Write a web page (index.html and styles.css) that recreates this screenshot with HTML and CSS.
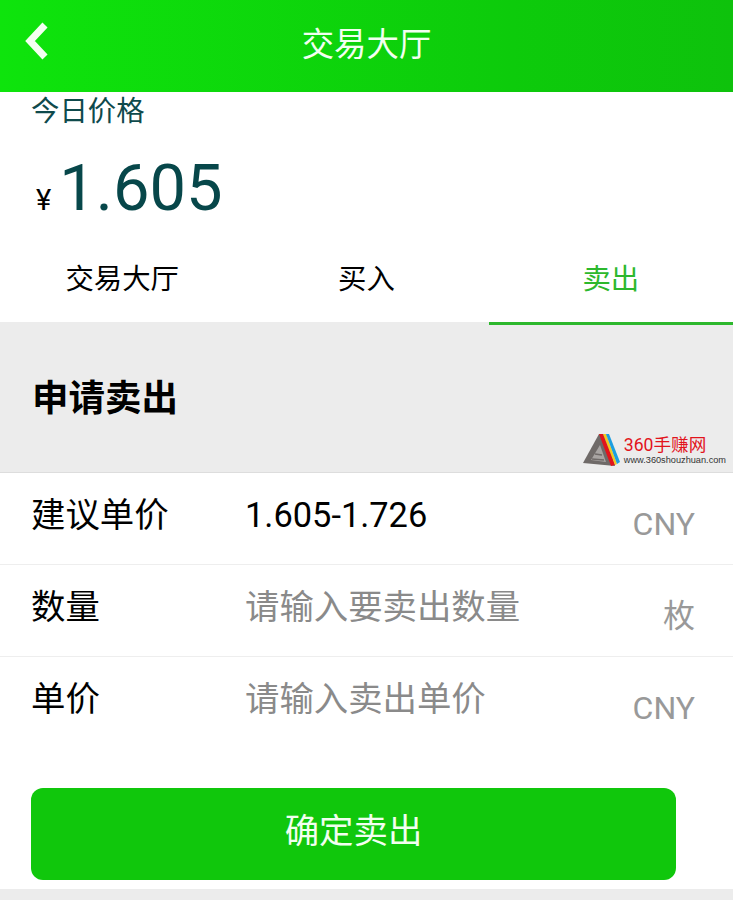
FILE: index.html
```html
<!DOCTYPE html>
<html lang="zh">
<head>
  <meta charset="UTF-8">
  <meta name="viewport" content="width=device-width, initial-scale=1.0">
  <title>交易大厅</title>
  <link rel="stylesheet" href="styles.css">
</head>
<body>
  <header class="topbar">
    <svg class="back" width="28" height="38" viewBox="0 0 28 38">
      <path d="M23 3 L8 19 L23 35" fill="none" stroke="#f4fff2" stroke-width="7"/>
    </svg>
    <h1>交易大厅</h1>
  </header>

  <section class="price">
    <p class="price-label">今日价格</p>
    <p class="price-value"><span class="yen">¥</span>1.605</p>
  </section>

  <nav class="tabs">
    <a class="tab">交易大厅</a>
    <a class="tab">买入</a>
    <a class="tab active">卖出</a>
  </nav>

  <section class="section-head">
    <h2>申请卖出</h2>
    <div class="watermark">
      <svg width="37" height="34" viewBox="0 0 37 34">
        <path d="M0 30 L16 1 L23 1 L32 33 Z" fill="#6f6a68"/>
        <path d="M8 27 L17 12 L23 29 Z" fill="#a8a4a2"/>
        <path d="M12 21 L19 22 M9 26 L21 27" stroke="#6f6a68" stroke-width="1.5"/>
        <path d="M16 1 L20 1 L32 32 L28 33 Z" fill="#e2141c"/>
        <path d="M20 1 L23 1 L34 31 L32 32 Z" fill="#f4c821"/>
        <path d="M23 1 L26 1 L37 29 L34 31 Z" fill="#1d9fe0"/>
      </svg>
      <div class="watermark-text">
        <span class="wm-name">360手赚网</span>
        <span class="wm-url">www.360shouzhuan.com</span>
      </div>
    </div>
  </section>

  <form class="sell-form">
    <div class="row">
      <span class="row-label">建议单价</span>
      <span class="row-value">1.605-1.726</span>
      <span class="row-unit">CNY</span>
    </div>
    <div class="row">
      <span class="row-label">数量</span>
      <span class="row-value placeholder">请输入要卖出数量</span>
      <span class="row-unit">枚</span>
    </div>
    <div class="row no-line">
      <span class="row-label">单价</span>
      <span class="row-value placeholder">请输入卖出单价</span>
      <span class="row-unit">CNY</span>
    </div>
    <button type="button" class="submit">确定卖出</button>
  </form>
  <div class="bottom-strip"></div>
</body>
</html>
```

FILE: styles.css
```css
html, body {
  height: 900px;
  overflow: hidden;
}
body {
  margin: 0;
  background: #fff;
  font-family: Roboto, "Noto Sans CJK SC", sans-serif;
  color: #000;
}
.topbar {
  position: relative;
  height: 92px;
  background: linear-gradient(90deg, #0ee40c 0%, #0dcb0b 70%, #0ec20c 100%);
  display: flex;
  justify-content: center;
}
.back {
  position: absolute;
  left: 22px;
  top: 22px;
}
.topbar h1 {
  margin: 0;
  padding-top: 23px;
  font-size: 32.4px;
  line-height: 44px;
  font-weight: 400;
  color: #f2fff0;
}
.price {
  height: 149px;
  padding-left: 31px;
  overflow: hidden;
}
.price-label {
  margin: 0;
  padding-top: 1px;
  font-size: 28.4px;
  line-height: 38px;
  color: #0f4a4c;
}
.price-value {
  margin: 18px 0 0;
  padding-left: 5px;
  font-size: 65px;
  line-height: 78px;
  color: #07474a;
}
.yen {
  font-size: 29px;
  margin-right: 8px;
  color: #000;
}
.tabs {
  display: flex;
  height: 81px;
}
.tab {
  position: relative;
  flex: 1;
  text-align: center;
  font-size: 28.4px;
  line-height: 78px;
}
.tab.active {
  color: #2db82d;
}
.tab.active::after {
  content: "";
  position: absolute;
  z-index: 1;
  left: 0;
  right: 0;
  bottom: -3px;
  height: 3px;
  background: #2db82d;
}
.section-head {
  position: relative;
  height: 151px;
  box-sizing: border-box;
  background: #ececec;
  border-bottom: 1px solid #ddd;
  padding: 52px 0 0 32px;
}
.section-head h2 {
  margin: 0;
  font-size: 36.5px;
  line-height: 50px;
  font-weight: 700;
}
.watermark {
  position: absolute;
  right: 7px;
  top: 111px;
  display: flex;
  align-items: center;
  gap: 4px;
}
.watermark-text {
  display: flex;
  flex-direction: column;
}
.wm-name {
  font-size: 17.6px;
  line-height: 20px;
  color: #e2141c;
}
.wm-url {
  font-family: "Liberation Sans", sans-serif;
  font-size: 9.2px;
  line-height: 11px;
  color: #333;
}
.sell-form {
  height: 416px;
  box-sizing: border-box;
}
.row {
  display: flex;
  height: 92px;
  box-sizing: border-box;
  padding: 20px 38px 0 31px;
  border-bottom: 1px solid #eee;
}
.row.no-line {
  border-bottom: none;
}
.row-label {
  width: 214px;
  font-size: 34.4px;
  line-height: 44px;
}
.row-value {
  flex: 1;
  font-size: 34.4px;
  line-height: 44px;
}
.row-value.placeholder {
  color: #8a8a8a;
}
.row-unit {
  padding-top: 9px;
  font-size: 32px;
  line-height: 44px;
  color: #999;
}
.submit {
  display: block;
  width: 645px;
  height: 92px;
  margin: 39px 0 0 31px;
  padding: 0 0 12px;
  background: #10c70c;
  border: none;
  border-radius: 12px;
  font-family: inherit;
  font-size: 34.4px;
  color: #f2fff0;
}
.bottom-strip {
  height: 11px;
  background: #ececec;
}
```
